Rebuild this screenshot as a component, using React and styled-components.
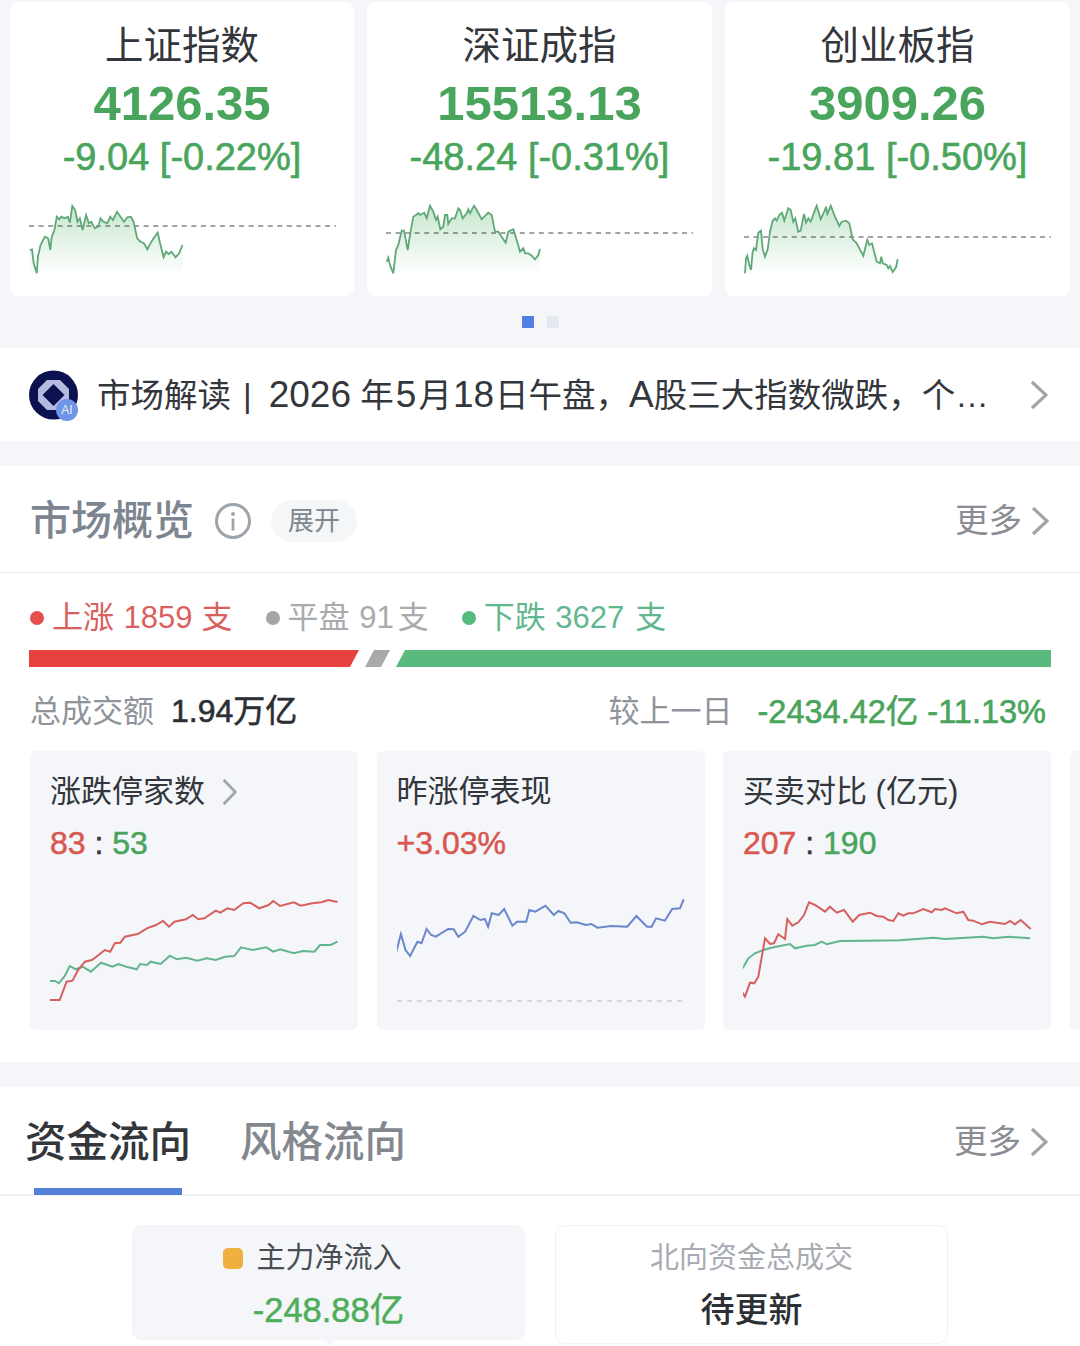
// App.jsx
import React from "react";
import styled, { createGlobalStyle } from "styled-components";

const FONT = `"Liberation Sans", "Noto Sans CJK SC", sans-serif`;
const RED = "#d9574f";
const GREEN = "#49a45c";

const GlobalStyle = createGlobalStyle`
  html, body {
    margin: 0;
    padding: 0;
    background: #f4f6fa;
  }
  body {
    font-family: ${FONT};
  }
`;

const Page = styled.div`
  width: 1080px;
  height: 1346px;
  overflow: hidden;
  background: #f4f6fa;
  color: #2c2f34;
`;

/* index cards */
const IndexRow = styled.div`
  display: grid;
  grid-template-columns: 344px 345px 345px;
  gap: 13px;
  padding: 2px 10px 0;
`;

const IndexCard = styled.div`
  height: 294px;
  box-sizing: border-box;
  padding: 19px 19px 11px;
  background: #fff;
  border-radius: 8px;
  display: flex;
  flex-direction: column;
  align-items: center;
`;

const IndexName = styled.div`
  font-size: 38.5px;
  line-height: 50px;
  color: #33363b;
`;

const IndexValue = styled.div`
  margin-top: 4px;
  font-size: 49px;
  line-height: 56px;
  font-weight: 700;
  color: ${GREEN};
`;

const IndexChange = styled.div`
  margin-top: 6px;
  font-size: 38px;
  line-height: 40px;
  color: ${GREEN};
  white-space: nowrap;
  -webkit-text-stroke: 0.6px ${GREEN};
`;

const IndexChartSvg = styled.svg`
  display: block;
  width: 310px;
  height: 85px;
  margin-top: auto;
  align-self: flex-start;
`;

const Dots = styled.div`
  height: 52px;
  display: flex;
  align-items: center;
  justify-content: center;
  gap: 13px;
`;

const Dot = styled.span`
  width: 12px;
  height: 12px;
  background: ${(p) => (p.$active ? "#5280e0" : "#e5e8f0")};
`;

/* news ticker */
const Ticker = styled.div`
  height: 93px;
  box-sizing: border-box;
  padding: 0 32px 0 29px;
  background: #fff;
  display: flex;
  align-items: center;
`;

const LogoWrap = styled.div`
  position: relative;
  width: 50px;
  height: 50px;
  flex-shrink: 0;
  margin-right: 18px;
`;

const LogoBadge = styled.span`
  position: absolute;
  right: 1px;
  bottom: -1px;
  width: 22px;
  height: 22px;
  border-radius: 50%;
  background: #6f95e6;
  color: #e8eefc;
  font-size: 12px;
  line-height: 22px;
  text-align: center;
`;

const TickerText = styled.div`
  flex: 1;
  padding-top: 2px;
  font-size: 33.5px;
  line-height: 44px;
  color: #33363b;
  white-space: nowrap;
  overflow: hidden;
`;

const TickerSep = styled.span`
  margin: 0 17px 0 12px;
`;

const TickerNum = styled.span`
  font-size: 37px;
  margin: 0 ${(p) => p.$gap || 0}px;
`;

const Chevron = styled.svg`
  display: block;
  flex-shrink: 0;
  fill: none;
  stroke: #a1a4aa;
  stroke-width: 3.2;
  width: ${(p) => p.$w || 18}px;
  height: ${(p) => p.$h || 30}px;
`;

/* market overview */
const Section = styled.section`
  margin-top: ${(p) => p.$top || 25}px;
  background: #fff;
`;

const OverviewHead = styled.div`
  height: 107px;
  box-sizing: border-box;
  padding: 4px 31px 0 30px;
  display: flex;
  align-items: center;
  border-bottom: 1px solid #ececef;
`;

const SectionTitle = styled.h2`
  margin: 0;
  font-size: 41px;
  line-height: 50px;
  font-weight: 500;
  color: #7d8590;
`;

const InfoIcon = styled.svg`
  display: block;
  width: 38px;
  height: 38px;
  margin-left: 20px;
`;

const Pill = styled.span`
  margin-left: 19px;
  width: 86px;
  height: 42px;
  border-radius: 21px;
  background: #f5f6f8;
  color: #80868f;
  font-size: 26px;
  line-height: 42px;
  text-align: center;
`;

const More = styled.div`
  margin-left: auto;
  display: flex;
  align-items: center;
  gap: 9px;
  font-size: 33.5px;
  line-height: 44px;
  color: #8a8d93;
`;

const TabMore = styled(More)`
  padding-top: 3px;
`;

const Legend = styled.div`
  padding: 25px 0 0 30px;
  display: flex;
  align-items: center;
  gap: 33px;
`;

const LegendItem = styled.div`
  display: flex;
  align-items: center;
  gap: 8px;
  font-size: 31px;
  line-height: 40px;
  white-space: nowrap;
  word-spacing: 1px;
  color: ${(p) => p.$color};
  &::before {
    content: "";
    width: 14px;
    height: 14px;
    border-radius: 50%;
    background: ${(p) => p.$dot};
  }
`;

const LegendUnit = styled.span`
  margin-left: ${(p) => p.$gap}px;
`;

const Bar = styled.div`
  margin: 12px 29px 0;
  height: 17px;
  display: flex;
  gap: 6px;
`;

const BarPart = styled.div`
  height: 100%;
  background: ${(p) => p.$color};
  flex: ${(p) => p.$grow} 0 ${(p) => p.$basis}px;
  clip-path: polygon(
    ${(p) => p.$skewLeft || 0}px 0,
    100% 0,
    calc(100% - ${(p) => p.$skewRight || 0}px) 100%,
    0 100%
  );
`;

const TotalRow = styled.div`
  margin-top: 19px;
  padding: 0 34px 0 30px;
  height: 44px;
  display: flex;
  align-items: center;
  font-size: 31px;
  white-space: nowrap;
`;

const Muted = styled.span`
  color: #8f949b;
`;

const TotalValue = styled.span`
  margin-left: 17px;
  font-size: 32px;
  color: #2c2f34;
  -webkit-text-stroke: 0.6px #2c2f34;
`;

const Delta = styled.span`
  margin-left: 25px;
  font-size: 32.5px;
  color: ${GREEN};
  -webkit-text-stroke: 0.6px ${GREEN};
`;

const Spacer = styled.div`
  flex: 1;
`;

const MiniRow = styled.div`
  margin-top: 21px;
  padding: 0 0 32px 30px;
  display: flex;
  gap: 18.5px;
  overflow: hidden;
`;

const MiniCard = styled.div`
  flex: 0 0 328px;
  min-width: 0;
  height: 279px;
  box-sizing: border-box;
  padding: 21px 18px 0 20px;
  background: #f4f6fa;
  border-radius: 6px;
`;

const MiniTitle = styled.div`
  display: flex;
  align-items: center;
  gap: 17px;
  font-size: 31px;
  line-height: 40px;
  color: #33363b;
  white-space: nowrap;
`;

const MiniValue = styled.div`
  margin-top: 11px;
  font-size: 32px;
  line-height: 40px;
  font-weight: 500;
  -webkit-text-stroke: 0.5px currentColor;
  color: #33363b;
`;

const Tone = styled.span`
  color: ${(p) => p.$color};
`;

const MiniChartSvg = styled.svg`
  display: block;
  width: 290px;
  height: 130px;
  margin-top: 17px;
`;

/* fund flow */
const TabBar = styled.div`
  height: 109px;
  box-sizing: border-box;
  padding: 0 32px 0 25px;
  display: flex;
  align-items: center;
  gap: 49px;
  border-bottom: 2px solid #f0f1f3;
`;

const Tab = styled.div`
  position: relative;
  height: 100%;
  display: flex;
  align-items: center;
  padding-bottom: 3px;
  box-sizing: border-box;
  font-size: 41.5px;
  font-weight: 500;
  color: ${(p) => (p.$active ? "#33363b" : "#83888f")};
  &::after {
    content: "";
    display: ${(p) => (p.$active ? "block" : "none")};
    position: absolute;
    left: 9px;
    right: 9px;
    bottom: -1px;
    height: 7px;
    background: #5580d8;
  }
`;

const FlowRow = styled.div`
  padding: 29px 0 30px;
  display: flex;
  justify-content: center;
  gap: 30px;
`;

const FlowCard = styled.div`
  position: relative;
  width: 393px;
  height: ${(p) => (p.$active ? 115 : 119)}px;
  box-sizing: border-box;
  padding-top: 11px;
  border-radius: 10px;
  background: ${(p) => (p.$active ? "#f4f6fa" : "#fff")};
  border: 1px solid ${(p) => (p.$active ? "#f1f3f7" : "#f0f1f4")};
  display: flex;
  flex-direction: column;
  align-items: center;
  &::after {
    content: "";
    display: ${(p) => (p.$active ? "block" : "none")};
    position: absolute;
    left: 190px;
    bottom: -6px;
    border-left: 7px solid transparent;
    border-right: 7px solid transparent;
    border-top: 6px solid #f4f6fa;
  }
`;

const FlowLabel = styled.div`
  display: flex;
  align-items: center;
  gap: 13px;
  font-size: 29px;
  line-height: 42px;
  padding-right: ${(p) => p.$shift || 0}px;
  color: ${(p) => p.$color};
  white-space: nowrap;
`;

const Marker = styled.span`
  width: 20px;
  height: 21px;
  border-radius: 5px;
  background: #f0b040;
`;

const FlowAmount = styled.div`
  margin-top: 9px;
  font-size: 34.5px;
  line-height: 44px;
  color: #4fae5a;
  white-space: nowrap;
  -webkit-text-stroke: 0.5px #4fae5a;
`;

const FlowPending = styled.div`
  margin-top: 9px;
  font-size: 34px;
  line-height: 44px;
  font-weight: 500;
  color: #2c2f34;
`;

const toPoints = (raw, sx, sy, ox, oy) =>
  raw.map(([x, y]) => `${(x / sx - ox).toFixed(1)},${(y / sy - oy).toFixed(1)}`);

const INDEXES = [
  {
    id: "sh",
    name: "上证指数",
    value: "4126.35",
    change: "-9.04 [-0.22%]",
    dash: 26,
    points: toPoints(
      [[86,750],[93,748],[98,790],[107,820],[110,770],[118,735],[130,710],[140,715],[146,750],[150,712],[158,690],[165,650],[172,658],[178,650],[188,655],[197,650],[203,668],[210,618],[218,630],[225,665],[232,655],[240,690],[250,645],[258,670],[265,665],[275,685],[285,680],[292,655],[300,665],[312,670],[320,650],[328,660],[340,635],[350,650],[360,665],[370,652],[380,650],[388,665],[398,715],[408,725],[418,730],[428,748],[438,728],[448,712],[458,698],[465,730],[475,772],[482,755],[490,762],[498,755],[510,772],[520,760],[530,735]],
      2.904, 3, 29, 200
    ),
  },
  {
    id: "sz",
    name: "深证成指",
    value: "15513.13",
    change: "-48.24 [-0.31%]",
    dash: 33,
    points: toPoints(
      [[80,215],[85,203],[90,225],[100,250],[108,180],[115,165],[125,122],[132,122],[143,180],[150,135],[160,80],[168,75],[175,70],[180,75],[193,68],[200,85],[210,47],[220,65],[228,90],[233,80],[241,118],[250,110],[255,75],[262,75],[265,102],[275,85],[285,85],[295,55],[300,60],[308,85],[320,70],[325,58],[330,70],[342,47],[350,60],[365,88],[385,68],[395,75],[405,125],[415,125],[425,140],[437,158],[445,125],[460,118],[470,150],[480,185],[490,175],[495,190],[505,190],[515,197],[525,208],[535,195],[540,177]],
      3, 3, 26, 10
    ),
  },
  {
    id: "cy",
    name: "创业板指",
    value: "3909.26",
    change: "-19.81 [-0.50%]",
    dash: 37,
    points: toPoints(
      [[75,250],[78,205],[82,197],[88,225],[93,240],[98,185],[102,175],[108,180],[115,128],[123,122],[128,178],[135,200],[143,178],[150,125],[158,92],[165,85],[170,92],[178,75],[186,68],[193,92],[205,55],[212,60],[220,95],[226,85],[235,125],[242,122],[252,72],[258,98],[265,85],[272,95],[285,60],[290,47],[302,88],[315,60],[318,50],[322,72],[332,47],[345,80],[358,108],[365,95],[378,92],[388,100],[398,148],[410,160],[418,175],[430,197],[442,150],[448,165],[456,160],[470,215],[480,220],[484,200],[488,220],[500,225],[505,235],[510,228],[518,246],[528,232],[533,208]],
      3, 3, 24, 10
    ),
  },
];

const LINE_RED = "#d5605f";
const LINE_GREEN = "#62b58e";
const LINE_BLUE = "#6a86cc";

const LIMIT_RED = toPoints(
  [[107,780],[130,780],[145,725],[158,722],[170,690],[185,665],[200,660],[210,650],[228,630],[240,635],[250,610],[262,608],[272,590],[300,582],[320,565],[340,555],[355,543],[368,560],[380,545],[405,538],[420,525],[432,538],[445,535],[470,512],[480,518],[495,505],[510,510],[530,490],[545,488],[565,505],[585,495],[595,483],[610,498],[640,487],[655,497],[680,490],[700,487],[715,480],[735,486]],
  2.178, 3, 50, 140
);
const LIMIT_GREEN = toPoints(
  [[107,723],[120,723],[128,730],[140,710],[152,678],[165,688],[180,680],[198,695],[220,668],[245,680],[258,672],[275,680],[298,688],[305,672],[320,675],[328,665],[350,672],[370,647],[385,658],[405,653],[430,662],[450,655],[470,660],[490,650],[510,648],[525,622],[550,630],[580,622],[595,635],[610,628],[640,640],[660,633],[685,635],[697,615],[720,615],[735,605]],
  2.178, 3, 50, 140
);
const YESTERDAY_BLUE = toPoints(
  [[862,635],[872,582],[882,630],[892,648],[908,605],[917,610],[928,567],[938,585],[948,590],[975,567],[987,568],[997,590],[1012,575],[1030,528],[1045,540],[1055,537],[1062,560],[1070,520],[1085,525],[1097,507],[1115,557],[1125,545],[1145,545],[1152,510],[1165,515],[1187,497],[1205,525],[1215,513],[1228,520],[1242,548],[1255,547],[1275,555],[1287,552],[1300,563],[1330,558],[1365,560],[1385,528],[1408,560],[1418,560],[1428,535],[1447,542],[1463,507],[1480,505],[1488,478]],
  2.178, 3, 396.5, 140
);
const TRADE_RED = toPoints(
  [[128,758],[135,770],[150,728],[163,730],[175,710],[195,595],[210,612],[222,610],[235,583],[255,597],[262,537],[277,557],[295,547],[312,525],[327,487],[345,495],[375,515],[390,500],[410,518],[432,510],[458,545],[478,525],[510,518],[530,528],[550,530],[565,540],[580,543],[595,520],[610,527],[625,520],[640,520],[670,507],[695,517],[705,507],[725,510],[735,505],[770,520],[790,515],[805,540],[820,542],[845,553],[870,545],[915,552],[930,543],[945,553],[962,540],[992,567]],
  3, 3, 43, 140
);
const TRADE_GREEN = toPoints(
  [[128,685],[145,655],[165,640],[190,630],[220,622],[270,612],[285,625],[320,617],[345,615],[365,605],[380,613],[420,603],[500,602],[600,601],[700,593],[735,597],[850,590],[880,595],[925,590],[990,595]],
  3, 3, 43, 140
);

function IndexChart({ id, points, dash }) {
  const first = points[0].split(",")[0];
  const last = points[points.length - 1].split(",")[0];
  return (
    <IndexChartSvg viewBox="0 0 310 85">
      <defs>
        <linearGradient id={id} x1="0" y1="0" x2="0" y2="1">
          <stop offset="0" stopColor="#5cb870" stopOpacity="0.34" />
          <stop offset="1" stopColor="#5cb870" stopOpacity="0" />
        </linearGradient>
      </defs>
      <polygon points={`${first},76 ${points.join(" ")} ${last},76`} fill={`url(#${id})`} />
      <line x1="0" y1={dash} x2="307" y2={dash} stroke="#44474b" strokeWidth="1.2" strokeDasharray="5 4.55" />
      <polyline points={points.join(" ")} fill="none" stroke="#5fa877" strokeWidth="1.8" />
    </IndexChartSvg>
  );
}

function MiniChart({ lines, dashed }) {
  return (
    <MiniChartSvg viewBox="0 0 290 130">
      {dashed && (
        <line x1="0" y1={dashed} x2="288" y2={dashed} stroke="#c9ccd2" strokeWidth="1.4" strokeDasharray="5 5" />
      )}
      {lines.map((line) => (
        <polyline key={line.color} points={line.points.join(" ")} fill="none" stroke={line.color} strokeWidth="2" />
      ))}
    </MiniChartSvg>
  );
}

function ChevronRight({ w, h }) {
  return (
    <Chevron $w={w} $h={h} viewBox="0 0 18 30" preserveAspectRatio="none">
      <polyline points="2,2 16,15 2,28" />
    </Chevron>
  );
}

function Logo() {
  return (
    <LogoWrap>
      <svg width="50" height="50" viewBox="0 0 50 50">
        <circle cx="24.5" cy="25" r="24.5" fill="#0c1250" />
        <polygon points="18,10 31,10 40,19 40,31 31,40 18,40 9,31 9,19" fill="#b5bade" />
        <polygon points="24.5,14 35.5,25 24.5,36 13.5,25" fill="#0c1250" />
      </svg>
      <LogoBadge>AI</LogoBadge>
    </LogoWrap>
  );
}

function App() {
  return (
    <Page>
      <GlobalStyle />
      <IndexRow>
        {INDEXES.map((item) => (
          <IndexCard key={item.id}>
            <IndexName>{item.name}</IndexName>
            <IndexValue>{item.value}</IndexValue>
            <IndexChange>{item.change}</IndexChange>
            <IndexChart id={item.id} points={item.points} dash={item.dash} />
          </IndexCard>
        ))}
      </IndexRow>
      <Dots>
        <Dot $active />
        <Dot />
      </Dots>

      <Ticker>
        <Logo />
        <TickerText>
          市场解读<TickerSep>|</TickerSep><TickerNum>2026</TickerNum> 年
          <TickerNum $gap={2}>5</TickerNum>月<TickerNum $gap={1}>18</TickerNum>日午盘，
          <TickerNum>A</TickerNum>股三大指数微跌，个…
        </TickerText>
        <ChevronRight />
      </Ticker>

      <Section>
        <OverviewHead>
          <SectionTitle>市场概览</SectionTitle>
          <InfoIcon viewBox="0 0 38 38">
            <circle cx="19" cy="19" r="16.5" fill="none" stroke="#9ea4ab" strokeWidth="3" />
            <circle cx="19" cy="12" r="2" fill="#9ea4ab" />
            <rect x="17.6" y="16.5" width="2.8" height="12" fill="#9ea4ab" />
          </InfoIcon>
          <Pill>展开</Pill>
          <More>
            更多
            <ChevronRight />
          </More>
        </OverviewHead>

        <Legend>
          <LegendItem $color="#d9605c" $dot="#e5504c">
            <span>上涨 1859<LegendUnit $gap={9}>支</LegendUnit></span>
          </LegendItem>
          <LegendItem $color="#a9abae" $dot="#a3a5a8">
            <span>平盘 91<LegendUnit $gap={4}>支</LegendUnit></span>
          </LegendItem>
          <LegendItem $color="#62b88e" $dot="#55bb7c">
            <span>下跌 3627<LegendUnit $gap={11}>支</LegendUnit></span>
          </LegendItem>
        </Legend>

        <Bar>
          <BarPart $color="#e8423f" $grow={0} $basis={330} $skewRight={9} />
          <BarPart $color="#a9a9a9" $grow={0} $basis={25} $skewLeft={9} $skewRight={9} />
          <BarPart $color="#5ab97c" $grow={1} $basis={0} $skewLeft={9} />
        </Bar>

        <TotalRow>
          <Muted>总成交额</Muted>
          <TotalValue>1.94万亿</TotalValue>
          <Spacer />
          <Muted>较上一日</Muted>
          <Delta>-2434.42亿 -11.13%</Delta>
        </TotalRow>

        <MiniRow>
          <MiniCard>
            <MiniTitle>
              涨跌停家数
              <ChevronRight w={15} h={28} />
            </MiniTitle>
            <MiniValue>
              <Tone $color={RED}>83</Tone> : <Tone $color={GREEN}>53</Tone>
            </MiniValue>
            <MiniChart
              lines={[
                { color: LINE_GREEN, points: LIMIT_GREEN },
                { color: LINE_RED, points: LIMIT_RED },
              ]}
            />
          </MiniCard>
          <MiniCard>
            <MiniTitle>昨涨停表现</MiniTitle>
            <MiniValue>
              <Tone $color={RED}>+3.03%</Tone>
            </MiniValue>
            <MiniChart lines={[{ color: LINE_BLUE, points: YESTERDAY_BLUE }]} dashed={121} />
          </MiniCard>
          <MiniCard>
            <MiniTitle>买卖对比 (亿元)</MiniTitle>
            <MiniValue>
              <Tone $color={RED}>207</Tone> : <Tone $color={GREEN}>190</Tone>
            </MiniValue>
            <MiniChart
              lines={[
                { color: LINE_GREEN, points: TRADE_GREEN },
                { color: LINE_RED, points: TRADE_RED },
              ]}
            />
          </MiniCard>
          <MiniCard />
        </MiniRow>
      </Section>

      <Section>
        <TabBar>
          <Tab $active>资金流向</Tab>
          <Tab>风格流向</Tab>
          <TabMore>
            更多
            <ChevronRight />
          </TabMore>
        </TabBar>
        <FlowRow>
          <FlowCard $active>
            <FlowLabel $color="#4a4d52" $shift={32}>
              <Marker />
              主力净流入
            </FlowLabel>
            <FlowAmount>-248.88亿</FlowAmount>
          </FlowCard>
          <FlowCard>
            <FlowLabel $color="#a8acb2">北向资金总成交</FlowLabel>
            <FlowPending>待更新</FlowPending>
          </FlowCard>
        </FlowRow>
      </Section>
    </Page>
  );
}

export default App;
